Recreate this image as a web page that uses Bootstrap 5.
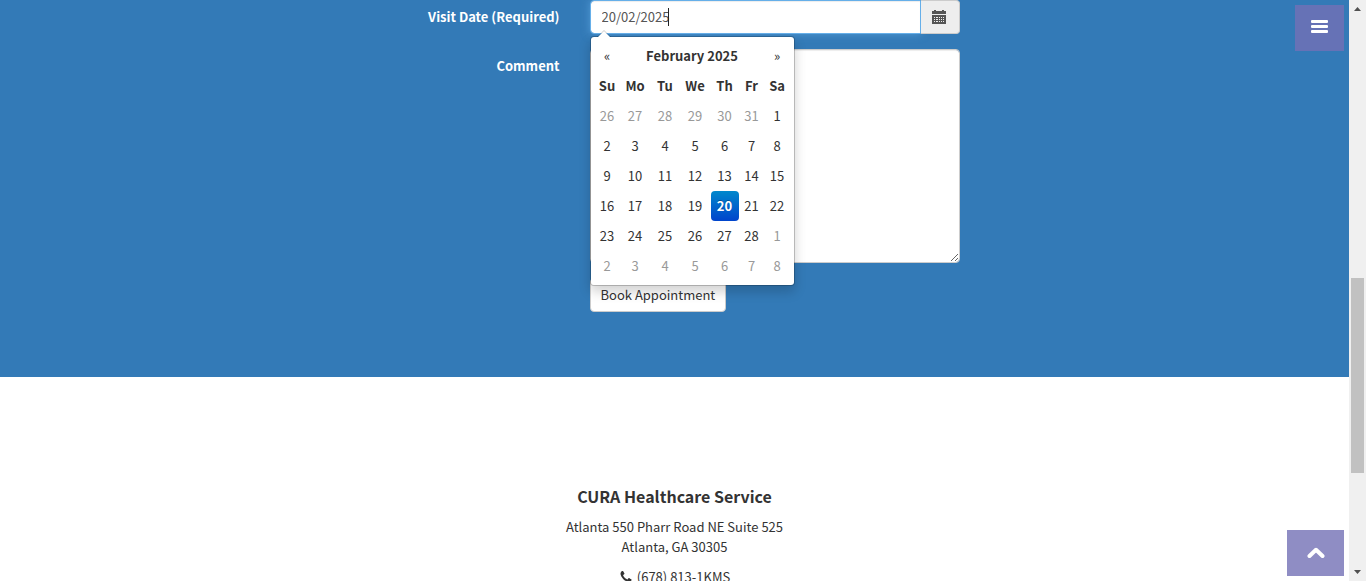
<!DOCTYPE html>
<html lang="en">
<head>
<meta charset="utf-8">
<meta name="viewport" content="width=device-width, initial-scale=1">
<title>CURA Healthcare Service</title>
<link href="https://cdn.jsdelivr.net/npm/bootstrap@5.3.0/dist/css/bootstrap.min.css" rel="stylesheet">
<style>
  body { font-family: "Noto Sans CJK SC", "Open Sans", sans-serif; font-size: 13px; line-height: 20px; color: #333; background: #fff; }
  .booking { background: #337ab7; padding-bottom: 65px; }
  .form-wrap { max-width: 1200px; }
  .form-wrap .row { --bs-gutter-x: 30px; margin: 0 0 15px; }
  .form-wrap .row:last-child { margin-bottom: 0; }
  .form-wrap label { color: #fff; font-weight: 700; padding-top: 7px; }
  .form-control { font-size: 13px; line-height: 20px; color: #555; border: 1px solid #ccc; border-radius: 4px; padding: 6px 12px; box-shadow: inset 0 1px 1px rgba(0,0,0,.075); }
  .date-box { height: 34px; padding: 5px 12px 7px 11px; border-color: #66afe9; box-shadow: inset 0 1px 1px rgba(0,0,0,.075), 0 0 8px rgba(102,175,233,.6); }
  .date-button { width: 39px; height: 34px; padding: 0 2px 0 0; border: 1px solid #ccc; border-left: 0; border-radius: 0 4px 4px 0; background: #eee; color: #555; }
  textarea.form-control { height: 214px; resize: vertical; }
  .text-caret { left: 78px; top: 8px; width: 1px; height: 18px; background: #222; z-index: 6; }
  .book-button { font-size: 13px; line-height: 20px; padding: 6px 10px; border: 1px solid #ccc; border-radius: 4px; background: #fff; color: #333; }
  .picker { top: 36px; left: 0; z-index: 10; width: 205px; padding: 4px; background: #fff; border: 1px solid rgba(0,0,0,.2); background-clip: padding-box; border-radius: 4px; box-shadow: 0 6px 12px rgba(0,0,0,.175); }
  .picker::before, .picker::after { content: ""; position: absolute; border-style: solid; border-color: transparent; border-top: 0; }
  .picker::before { top: -7px; left: 6px; border-width: 0 7px 7px; border-bottom-color: rgba(0,0,0,.2); }
  .picker::after { top: -6px; left: 7px; border-width: 0 6px 6px; border-bottom-color: #fff; }
  .picker table { width: 195px; table-layout: fixed; border-collapse: separate; border-spacing: 0; text-align: center; }
  .picker th, .picker td { height: 30px; padding: 0; border-radius: 4px; vertical-align: middle; }
  .picker button { width: 100%; height: 30px; padding: 0; border: 0; background: none; color: #333; }
  .outside-day { color: #999; }
  .picked-day { color: #fff; font-weight: 700; background: linear-gradient(#08c, #04c); text-shadow: 0 -1px 0 rgba(0,0,0,.25); }
  .contact { padding-top: 109px; }
  .contact h4 { font-size: 16px; line-height: 20px; font-weight: 700; margin: 0 0 11px; }
  .contact p { margin: 0 0 10px; }
  .corner { z-index: 20; height: 46px; right: 5px; padding: 0; border: 0; color: #fff; background: rgba(115,112,181,.8); }
  .menu-corner { top: 5px; width: 49px; }
  .up-corner { bottom: 5px; width: 57px; }
  .scroll-track { width: 17px; background: #f0f0f0; }
  .scroll-thumb { width: 13px; background: #c1c1c1; }
</style>
</head>
<body>
<div class="d-flex vh-100 overflow-hidden">
  <div class="position-relative flex-grow-1 overflow-hidden">
    <section class="booking">
      <form class="form-wrap mx-auto">
        <div class="row">
          <label class="offset-3 col-2 text-end" for="visit">Visit Date (Required)</label>
          <div class="col-4">
            <div class="position-relative d-flex">
              <input class="form-control date-box rounded-end-0" id="visit" type="text" value="20/02/2025">
              <span class="text-caret position-absolute"></span>
              <button class="date-button flex-shrink-0 d-flex align-items-center justify-content-center" type="button" aria-label="Choose date">
                <svg width="14" height="14" viewBox="0 0 14 14" fill="currentColor"><path d="M0 1h2V0h2v1h6V0h2v1h2v3H0zM0 5h14v9H0z"/><path fill="#eee" d="M2 7h1v1H2zm2 0h2v1H4zm3 0h1v1H7zm2 0h1v1H9zm2 0h1v1h-1zM2 9h1v1H2zm2 0h2v1H4zm3 0h1v1H7zm2 0h1v1H9zm2 0h1v1h-1zM2 11h1v1H2zm2 0h2v1H4zm3 0h1v1H7zm2 0h1v1H9zm2 0h1v1h-1z"/></svg>
              </button>
              <div class="picker position-absolute">
                <table>
                  <colgroup><col width="25"><col width="31"><col width="29"><col width="31"><col width="28"><col width="26"><col width="25"></colgroup>
                  <thead>
                    <tr><th><button type="button" aria-label="Previous month">«</button></th><th colspan="5">February 2025</th><th><button type="button" aria-label="Next month">»</button></th></tr>
                    <tr><th>Su</th><th>Mo</th><th>Tu</th><th>We</th><th>Th</th><th>Fr</th><th>Sa</th></tr>
                  </thead>
                  <tbody>
                    <tr><td class="outside-day">26</td><td class="outside-day">27</td><td class="outside-day">28</td><td class="outside-day">29</td><td class="outside-day">30</td><td class="outside-day">31</td><td>1</td></tr>
                    <tr><td>2</td><td>3</td><td>4</td><td>5</td><td>6</td><td>7</td><td>8</td></tr>
                    <tr><td>9</td><td>10</td><td>11</td><td>12</td><td>13</td><td>14</td><td>15</td></tr>
                    <tr><td>16</td><td>17</td><td>18</td><td>19</td><td class="picked-day">20</td><td>21</td><td>22</td></tr>
                    <tr><td>23</td><td>24</td><td>25</td><td>26</td><td>27</td><td>28</td><td class="outside-day">1</td></tr>
                    <tr><td class="outside-day">2</td><td class="outside-day">3</td><td class="outside-day">4</td><td class="outside-day">5</td><td class="outside-day">6</td><td class="outside-day">7</td><td class="outside-day">8</td></tr>
                  </tbody>
                </table>
              </div>
            </div>
          </div>
        </div>
        <div class="row">
          <label class="offset-3 col-2 text-end" for="comment">Comment</label>
          <div class="col-4"><textarea class="form-control" id="comment"></textarea></div>
        </div>
        <div class="row">
          <div class="offset-5 col-4"><button class="book-button" type="submit">Book Appointment</button></div>
        </div>
      </form>
    </section>
    <footer class="contact text-center">
      <h4>CURA Healthcare Service</h4>
      <p>Atlanta 550 Pharr Road NE Suite 525<br>Atlanta, GA 30305</p>
      <p class="d-flex justify-content-center align-items-center gap-1">
        <svg width="14" height="14" viewBox="0 0 1792 1792" fill="currentColor"><path d="M1600 1240q0 27-10 70.500t-21 68.500q-21 50-122 106-94 51-186 51-27 0-53-3.500t-57.500-12.500-47-14.500-55.500-20.500-49-18q-98-35-175-83-127-79-264-216t-216-264q-48-77-83-175-3-9-18-49t-20.500-55.500-14.500-47-12.500-57.500-3.500-53q0-92 51-186 56-101 106-122 25-11 68.500-21t70.500-10q14 0 21 3 18 6 53 76 11 19 30 54t35 63.500 31 53.500q3 4 17.500 25t21.500 35.500 7 28.500q0 20-28.500 50t-62 55-62 53-28.500 46q0 9 5 22.500t8.500 20.500 14 24 11.500 19q76 137 174 235t235 174q2 1 19 11.500t24 14 20.500 8.500 22.500 5q18 0 46-28.500t53-62 55-62 50-28.500q14 0 28.500 7t35.500 21.500 25 17.500q25 15 53.500 31t63.500 35 54 30q70 35 76 53 3 7 3 21z"/></svg>
        <span>(678) 813-1KMS</span>
      </p>
    </footer>
    <button class="corner menu-corner position-absolute d-flex align-items-center justify-content-center pb-1" type="button" aria-label="Menu">
      <svg width="17" height="13" viewBox="0 0 17 13" fill="currentColor"><rect width="17" height="3" rx="1"/><rect y="5" width="17" height="3" rx="1"/><rect y="10" width="17" height="3" rx="1"/></svg>
    </button>
    <button class="corner up-corner position-absolute d-flex align-items-center justify-content-center" type="button" aria-label="Back to top">
      <svg width="18" height="12" viewBox="0 0 18 12"><path d="M2.500 9 9 2.800 15.500 9" fill="none" stroke="currentColor" stroke-width="4" stroke-linejoin="round" stroke-linecap="round"/></svg>
    </button>
  </div>
  <div class="scroll-track flex-shrink-0 d-flex flex-column align-items-center justify-content-between py-1" aria-hidden="true">
    <svg class="flex-shrink-0" width="17" height="10" viewBox="0 0 17 10"><path d="M5 7h7L8.500 3z" fill="#505050"/></svg>
    <div class="w-100 d-flex flex-column align-items-center flex-grow-1">
      <div style="flex-grow: 264"></div>
      <div class="scroll-thumb" style="flex-grow: 195"></div>
      <div style="flex-grow: 94"></div>
    </div>
    <svg class="flex-shrink-0" width="17" height="10" viewBox="0 0 17 10"><path d="M5 3h7L8.500 7z" fill="#505050"/></svg>
  </div>
</div>
<script src="https://cdn.jsdelivr.net/npm/bootstrap@5.3.0/dist/js/bootstrap.bundle.min.js"></script>
</body>
</html>
